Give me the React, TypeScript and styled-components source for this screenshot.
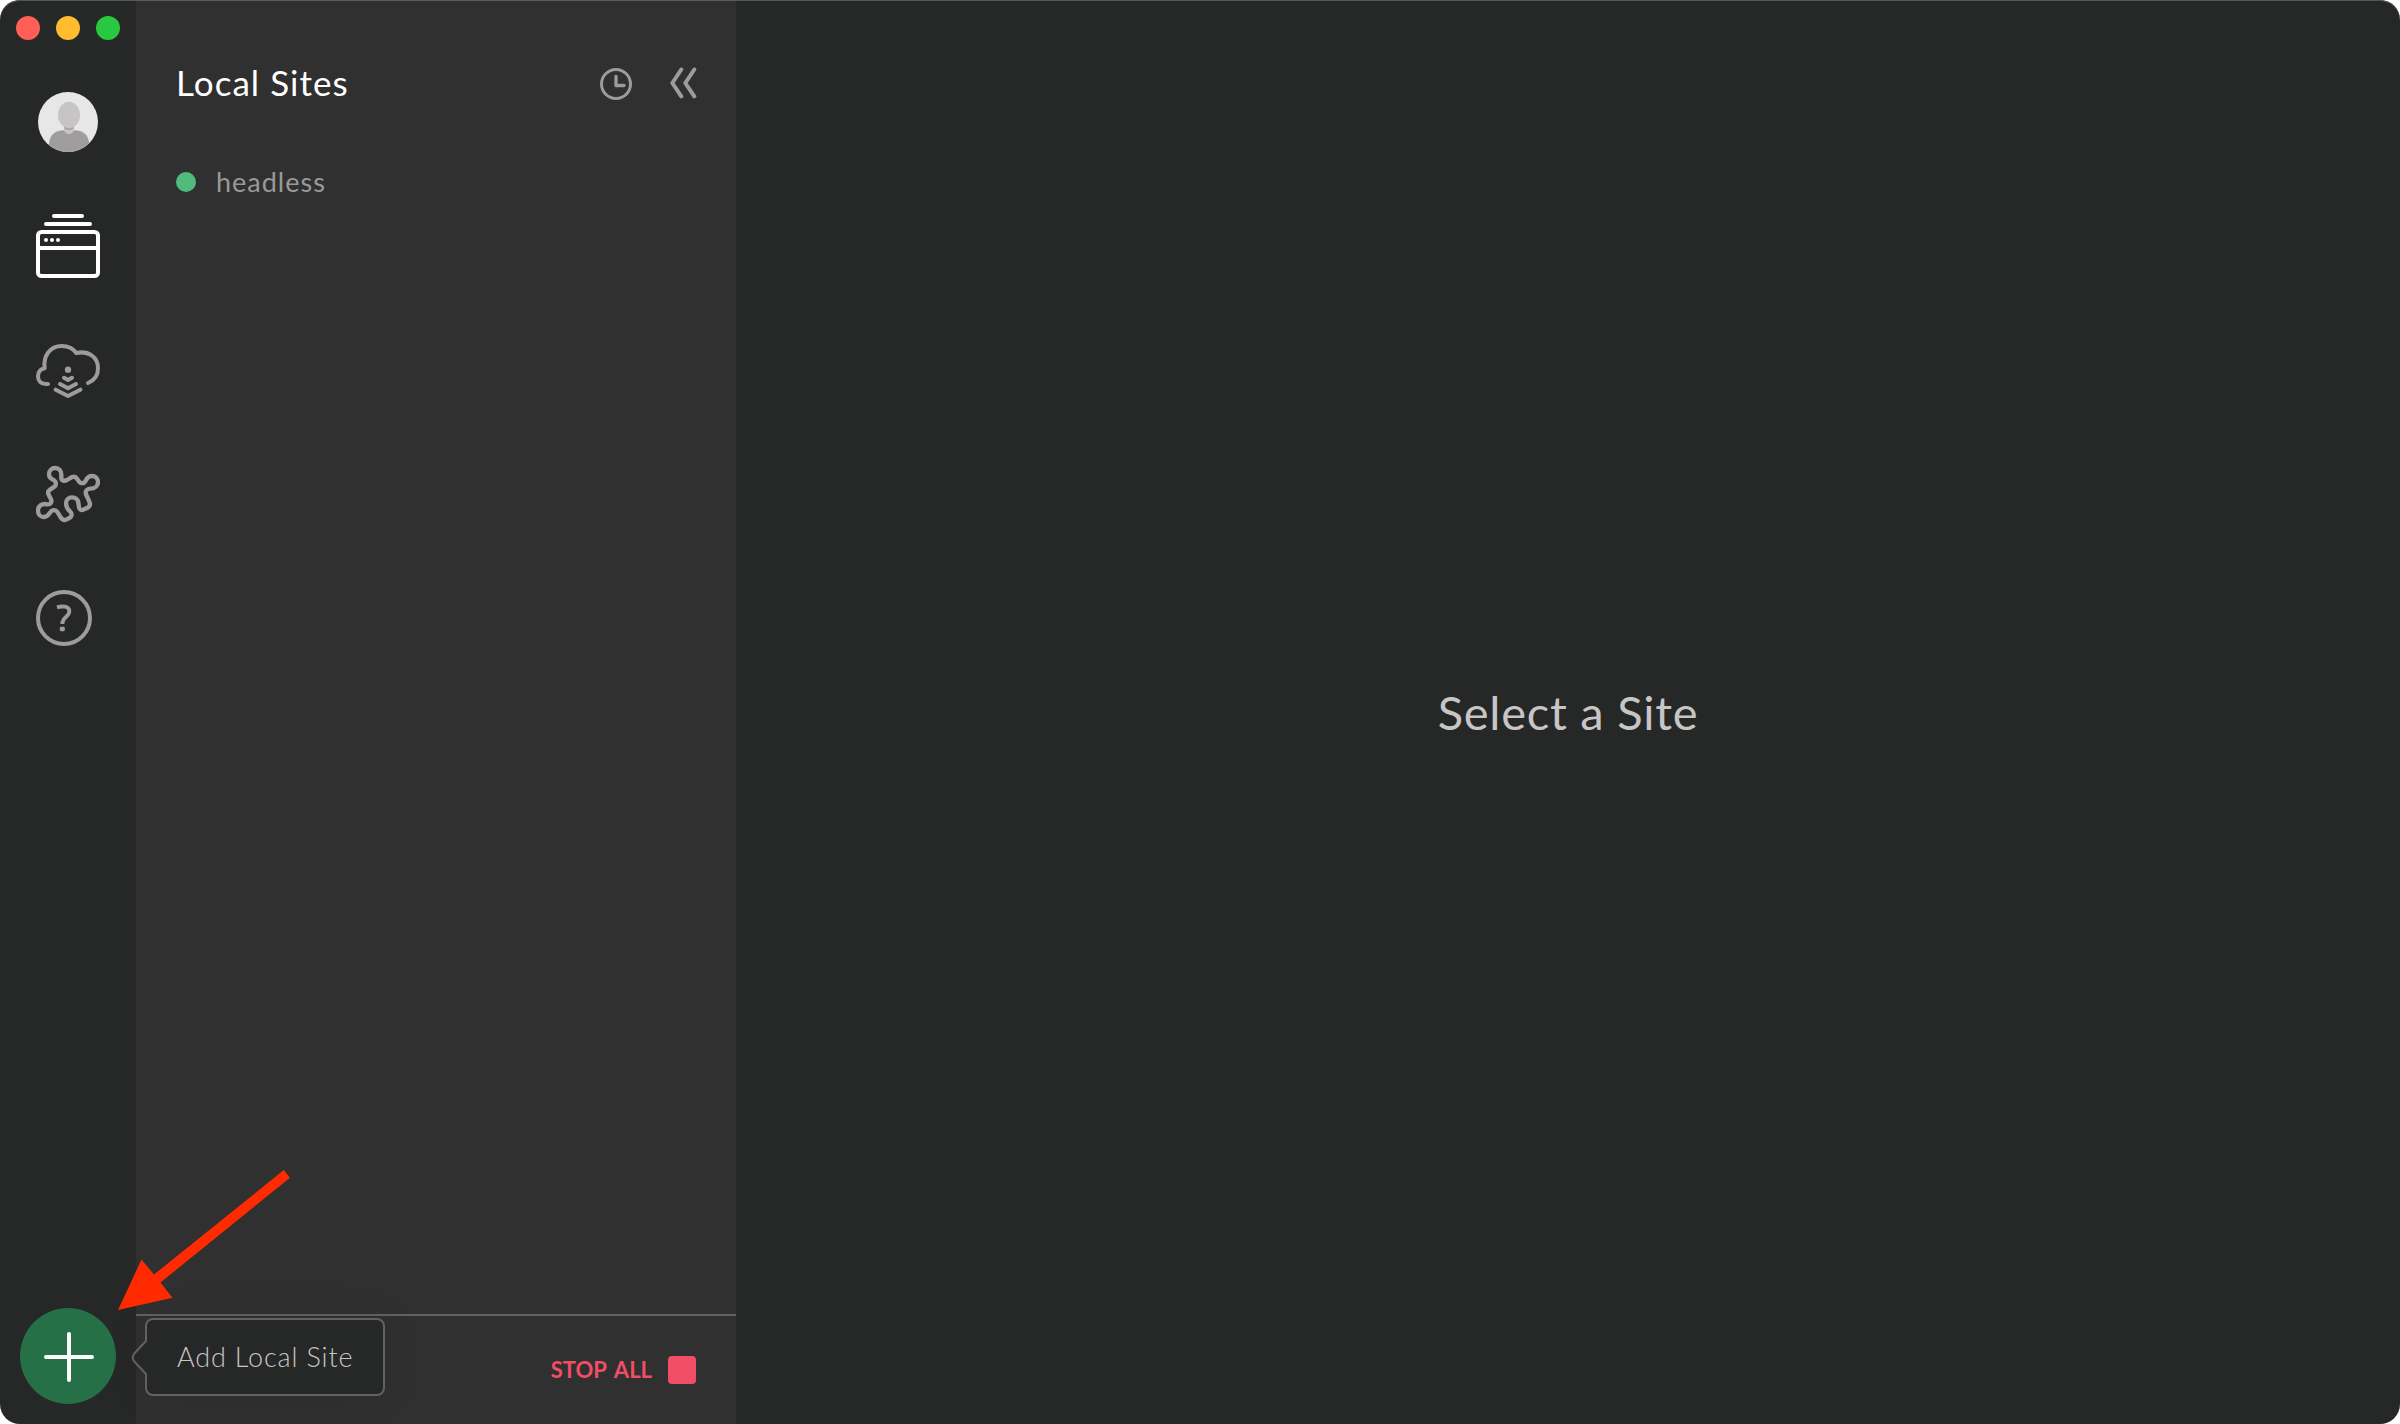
import React from "react";
import styled, { createGlobalStyle } from "styled-components";

const color = {
  base: "#262827",
  panel: "#303030",
  line: "#616161",
  icon: "#9f9b9c",
  muted: "#999999",
  light: "#c8c5c6",
  green: "#267048",
  running: "#51bb7b",
  stop: "#ef4e65",
  arrow: "#ff2a00",
};

const GlobalStyle = createGlobalStyle`
  * { box-sizing: border-box; }
  body { margin: 0; background: #ffffff; font-family: Lato, "Open Sans", sans-serif; }
  button { border: 0; padding: 0; background: none; font: inherit; color: inherit; display: block; }
  svg { display: block; }
`;

const Window = styled.div`
  position: relative;
  display: flex;
  width: 2400px;
  height: 1424px;
  border-radius: 20px;
  overflow: hidden;
  background: ${color.base};
  box-shadow: inset 0 1px 0 #555756;
`;

const Rail = styled.nav`
  display: flex;
  flex-direction: column;
  width: 136px;
  padding: 16px 0 20px;
`;

const TrafficLights = styled.div`
  display: flex;
  gap: 16px;
  padding-left: 16px;
`;

const Light = styled.span<{ $fill: string }>`
  width: 24px;
  height: 24px;
  border-radius: 50%;
  background: ${(p) => p.$fill};
`;

const Avatar = styled.button`
  && {
    width: 60px;
    height: 60px;
    margin: 52px 0 0 38px;
    border-radius: 50%;
    overflow: hidden;
  }
`;

const RailItem = styled.button<{ $gap: number }>`
  && {
    margin: ${(p) => p.$gap}px 0 0 36px;
    align-self: flex-start;
  }
`;

const AddButton = styled.button`
  && {
    display: flex;
    align-items: center;
    justify-content: center;
    width: 96px;
    height: 96px;
    margin: auto 0 0 20px;
    border-radius: 50%;
    background: ${color.green};
  }
`;

const SitesPanel = styled.aside`
  display: flex;
  flex-direction: column;
  width: 600px;
  background: ${color.panel};
  box-shadow: inset 0 1px 0 #5b5b5b;
`;

const PanelHeader = styled.header`
  display: flex;
  align-items: center;
  height: 44px;
  margin: 62px 38px 0 40px;
`;

const PanelTitle = styled.h1`
  flex: 1;
  margin: 0;
  padding-bottom: 3px;
  font-size: 35px;
  font-weight: 400;
  line-height: 41px;
  letter-spacing: 1.05px;
  color: #ffffff;
`;

const HeaderAction = styled.button<{ $gap?: number; $lift?: number }>`
  && {
    margin-left: ${(p) => p.$gap ?? 0}px;
    margin-bottom: ${(p) => p.$lift ?? 0}px;
  }
`;

const SiteList = styled.ul`
  flex: 1;
  margin: 56px 0 0;
  padding: 0 40px;
  list-style: none;
`;

const SiteRow = styled.li`
  display: flex;
  align-items: center;
  gap: 20px;
  height: 40px;
`;

const StatusDot = styled.span`
  width: 20px;
  height: 20px;
  border-radius: 50%;
  background: ${color.running};
`;

const SiteName = styled.span`
  font-size: 27px;
  line-height: 40px;
  letter-spacing: 1px;
  color: ${color.muted};
`;

const PanelFooter = styled.footer`
  display: flex;
  justify-content: flex-end;
  height: 110px;
  padding: 40px 40px 0 0;
  border-top: 2px solid ${color.line};
`;

const StopAll = styled.button`
  && {
    display: flex;
    align-items: center;
    gap: 16px;
    height: 28px;
    font-size: 22px;
    font-weight: 700;
    line-height: 28px;
    word-spacing: 3px;
    color: ${color.stop};
  }
`;

const StopSquare = styled.span`
  width: 28px;
  height: 28px;
  border-radius: 4px;
  background: ${color.stop};
`;

const Main = styled.main`
  flex: 1;
  display: flex;
  align-items: center;
  justify-content: center;
`;

const EmptyMessage = styled.p`
  margin: 0;
  font-size: 47px;
  line-height: 60px;
  letter-spacing: 0.75px;
  color: ${color.light};
`;

const Tooltip = styled.div`
  position: absolute;
  left: 145px;
  top: 1318px;
  width: 240px;
  height: 78px;
  padding-left: 30px;
  border: 2px solid ${color.line};
  border-radius: 8px;
  background: ${color.base};
  box-shadow: 0 0 40px rgba(0, 0, 0, 0.08);
  font-size: 27px;
  font-weight: 300;
  line-height: 73px;
  letter-spacing: 0.85px;
  white-space: nowrap;
  color: ${color.light};
`;

const TooltipTip = styled.svg`
  position: absolute;
  left: -16px;
  top: 18px;
`;

const Pointer = styled.svg`
  position: absolute;
  left: 110px;
  top: 1160px;
`;

const AvatarPicture = () => (
  <svg width="60" height="60" viewBox="114 276 180 180">
    <rect x="114" y="276" width="180" height="180" fill="#e7e7e7" />
    <path d="M147 456 V432 C149 403 167 391 192 391 H222 C248 391 265 403 268 432 V456 Z" fill="#a09d9e" />
    <path d="M192 378 H222 V388 C222 407 192 407 192 388 Z" fill="#c6c4c5" />
    <path d="M192 380 H222 V385 C212 393 202 393 192 385 Z" fill="#a9a6a7" />
    <ellipse cx="207" cy="345" rx="33" ry="39.5" fill="#c6c4c5" />
  </svg>
);

const SitesIcon = () => (
  <svg width="64" height="64" viewBox="0 0 64 64" fill="none" stroke="#ffffff" strokeWidth="4" strokeLinecap="round">
    <path d="M18 2H46M10 10H54" />
    <rect x="2" y="18" width="60" height="44" rx="3.5" />
    <path d="M2 34H62" strokeLinecap="butt" />
    <g fill="#ffffff" stroke="none">
      <circle cx="10" cy="26" r="2" />
      <circle cx="16" cy="26" r="2" />
      <circle cx="22" cy="26" r="2" />
    </g>
  </svg>
);

const CloudIcon = () => (
  <svg
    width="64"
    height="54"
    viewBox="48 57 192 162"
    fill="none"
    stroke={color.icon}
    strokeWidth="12"
    strokeLinecap="round"
    strokeLinejoin="round"
  >
    <path d="M84 177 H77 C63 177 54 167 54 154 C54 141 62 132 74 130 C69 93 90 63 125 63 C145 63 160 71 169 84 C205 76 234 96 234 130 C234 151 222 167 204 174" />
    <circle cx="144" cy="134" r="9.5" fill={color.icon} stroke="none" />
    <path d="M132 158.500 L144 165 L156 158.500" />
    <path d="M120 177 L144 190 L168 177" />
    <path d="M107 194 L144 213 L181 194" />
  </svg>
);

const AddonsIcon = () => (
  <svg
    width="64"
    height="58"
    viewBox="48 45 192 174"
    fill="none"
    stroke={color.icon}
    strokeWidth="13"
    strokeLinejoin="round"
  >
    <path d="M124 74 C124 62 116 54 106 54 C95 54 87 62 87 73 C87 82 92 86 99 89 C109 94 111 105 102 111 L90 119 C84 123 83 128 86 134 L93 148 C97 158 91 164 82 163 C67 159 54 167 54 182 C54 193 62 201 72 201 C81 201 85 196 90 188 C96 178 107 178 113 187 L122 202 C127 210 132 212 140 208 L148 204 C157 199 157 191 150 184 C142 177 138 169 138 160 C138 150 146 142 156 142 C167 142 174 149 175 158 L177 171 C178 180 184 182 192 178 L203 173 C210 169 212 164 208 155 L199 135 C194 124 199 117 211 116 C225 116 234 107 234 96 C234 86 226 78 216 78 C206 78 201 84 197 92 C192 102 181 102 176 93 L171 86 C167 79 161 79 154 82 L141 90 C132 95 123 91 124 82 Z" />
  </svg>
);

const HelpIcon = () => (
  <svg width="56" height="56" viewBox="48 45 168 168" fill="none" stroke={color.icon} strokeWidth="12">
    <circle cx="132" cy="129" r="78" />
    <path d="M111 97 C124 93 148 92 148 109 C148 127 127 124 127 147" strokeWidth="11.500" />
    <rect x="119.500" y="155" width="15" height="14" rx="4" fill={color.icon} stroke="none" />
  </svg>
);

const ClockIcon = () => (
  <svg width="32" height="32" viewBox="0 0 32 32" fill="none" stroke={color.icon} strokeLinecap="round" strokeLinejoin="round">
    <circle cx="16" cy="16" r="14.500" strokeWidth="3" />
    <path d="M16 8.300V17.500H24" strokeWidth="3.300" />
  </svg>
);

const CollapseIcon = () => (
  <svg width="28" height="32" viewBox="0 0 28 32" fill="none" stroke={color.icon} strokeWidth="4" strokeLinecap="round" strokeLinejoin="round">
    <path d="M11.300 2.500L2.300 16L11.300 29.300M24.300 2.500L15.300 16L24.300 29.300" />
  </svg>
);

const App = () => (
  <>
    <GlobalStyle />
    <Window>
      <Rail>
        <TrafficLights>
          <Light $fill="#ff5f57" />
          <Light $fill="#febc2e" />
          <Light $fill="#28c840" />
        </TrafficLights>
        <Avatar aria-label="Account">
          <AvatarPicture />
        </Avatar>
        <RailItem $gap={62} aria-label="Local sites">
          <SitesIcon />
        </RailItem>
        <RailItem $gap={66} aria-label="Connect">
          <CloudIcon />
        </RailItem>
        <RailItem $gap={67} aria-label="Add-ons">
          <AddonsIcon />
        </RailItem>
        <RailItem $gap={67} aria-label="Help">
          <HelpIcon />
        </RailItem>
        <AddButton aria-label="Add local site">
          <svg width="52" height="52" viewBox="0 0 52 52" stroke="#ffffff" strokeWidth="4" strokeLinecap="round">
            <path d="M27 4V50M4 27H50" />
          </svg>
        </AddButton>
      </Rail>

      <SitesPanel>
        <PanelHeader>
          <PanelTitle>Local Sites</PanelTitle>
          <HeaderAction aria-label="Recent">
            <ClockIcon />
          </HeaderAction>
          <HeaderAction $gap={38} $lift={2} aria-label="Collapse">
            <CollapseIcon />
          </HeaderAction>
        </PanelHeader>
        <SiteList>
          <SiteRow>
            <StatusDot />
            <SiteName>headless</SiteName>
          </SiteRow>
        </SiteList>
        <PanelFooter>
          <StopAll>
            STOP ALL
            <StopSquare />
          </StopAll>
        </PanelFooter>
      </SitesPanel>

      <Main>
        <EmptyMessage>Select a Site</EmptyMessage>
      </Main>

      <Tooltip role="tooltip">
        Add Local Site
        <TooltipTip width="18" height="40" viewBox="0 0 18 40">
          <path d="M18 1 L15.200 3 L3.200 15.500 Q-0.200 19.500 3.200 23.500 L15.200 36 L18 38 Z" fill={color.base} />
          <path d="M15.500 2.500 L3.300 15.500 Q0.200 19.500 3.300 23.500 L15.500 36.500" fill="none" stroke={color.line} strokeWidth="2" />
        </TooltipTip>
      </Tooltip>

      <Pointer width="190" height="160" viewBox="110 1160 190 160">
        <path
          d="M283.800 1170L290 1177.700L160.500 1282.500L172.500 1297.800L118 1310L141.500 1259.500L154 1274.500Z"
          fill={color.arrow}
        />
      </Pointer>
    </Window>
  </>
);

export default App;
